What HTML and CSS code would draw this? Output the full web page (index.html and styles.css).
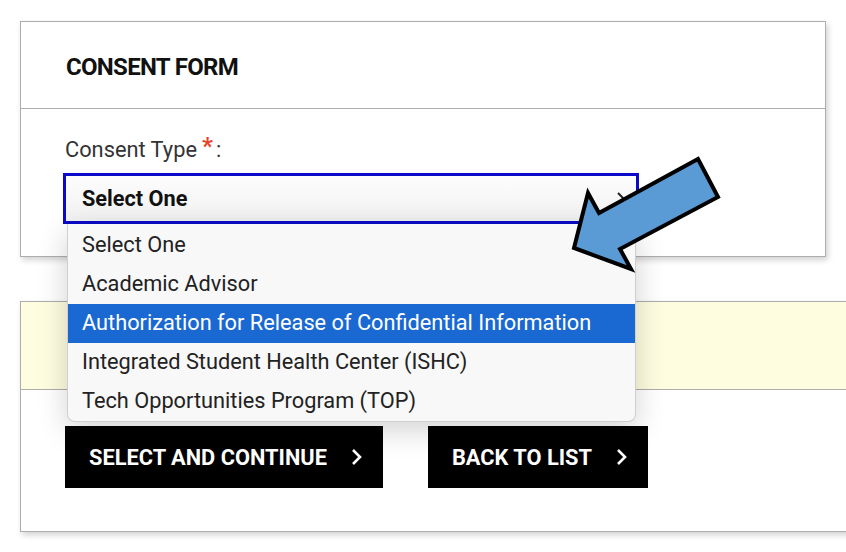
FILE: index.html
```html
<!DOCTYPE html>
<html lang="en">
<head>
<meta charset="utf-8">
<title>Consent Form</title>
<link rel="stylesheet" href="styles.css">
</head>
<body>
<div class="page">
  <section class="card consent">
    <header class="card-head"><h2 class="title">CONSENT FORM</h2></header>
    <div class="card-body">
      <label class="label">Consent Type<span class="req">*</span>:</label>
      <div class="select-wrap">
        <div class="select">
          <span>Select One</span>
          <svg class="select-chev" width="10" height="16" viewBox="0 0 10 16"><path d="M2 2 L8 8 L2 14" fill="none" stroke="#222" stroke-width="2"/></svg>
        </div>
        <ul class="menu">
          <li class="opt">Select One</li>
          <li class="opt">Academic Advisor</li>
          <li class="opt active">Authorization for Release of Confidential Information</li>
          <li class="opt">Integrated Student Health Center (ISHC)</li>
          <li class="opt">Tech Opportunities Program (TOP)</li>
        </ul>
      </div>
    </div>
  </section>
  <section class="card actions">
    <div class="notice"></div>
    <div class="buttons">
      <button class="btn wide">SELECT AND CONTINUE<svg class="btn-chev" width="12" height="20" viewBox="0 0 12 20"><path d="M3 3 L10 10 L3 17" fill="none" stroke="#fff" stroke-width="2.6"/></svg></button>
      <button class="btn">BACK TO LIST<svg class="btn-chev" width="12" height="20" viewBox="0 0 12 20"><path d="M3 3 L10 10 L3 17" fill="none" stroke="#fff" stroke-width="2.6"/></svg></button>
    </div>
  </section>
  <svg class="pointer" width="156" height="122" viewBox="0 0 156 122">
    <polygon points="6,95 20,40 31,60 130,6 150,44 52,96 63,116" fill="#5b9bd5" stroke="#000" stroke-width="4" stroke-linejoin="miter"/>
  </svg>
</div>
</body>
</html>
```

FILE: styles.css
```css
html, body {
  margin: 0;
  padding: 0;
  background: #fff;
  overflow: hidden;
}
body {
  font-family: Roboto, "Liberation Sans", Arial, sans-serif;
  color: #222;
  width: 846px;
  height: 552px;
}
.page {
  position: relative;
  padding: 21px 0 0 20px;
  width: 846px;
  height: 552px;
  box-sizing: border-box;
}
.card {
  border: 1px solid #adadad;
  background: #fff;
  box-shadow: 2px 3px 6px rgba(0,0,0,0.18);
}
.consent {
  width: 804px;
}
.card-head {
  height: 86px;
  border-bottom: 1px solid #adadad;
  display: flex;
  align-items: center;
  padding-left: 45px;
}
.title {
  margin: 0;
  font-size: 24px;
  font-weight: 700;
  letter-spacing: -0.7px;
  color: #111;
  padding-top: 4px;
}
.card-body {
  padding: 28px 0 32px 42px;
}
.label {
  display: block;
  font-size: 21.8px;
  color: #333;
  line-height: 24px;
  margin: 0 0 11px 2px;
}
.req {
  color: #e8452c;
  font-size: 24px;
  font-weight: 700;
  margin-left: 5px;
  margin-right: 3px;
  position: relative;
  top: -3px;
}
.select-wrap {
  position: relative;
  width: 576px;
}
.select {
  height: 45px;
  border: 3px solid #0a0ac8;
  background: linear-gradient(#fdfdfd, #f1f1f1);
  display: flex;
  align-items: center;
  justify-content: space-between;
  padding: 0 10px 0 16px;
  font-size: 21.7px;
  font-weight: 700;
  color: #111;
}
.select-chev {
  display: block;
}
.menu {
  position: absolute;
  z-index: 5;
  top: 100%;
  left: 4px;
  width: 567px;
  margin: 0;
  padding: 2px 0 0;
  list-style: none;
  background: #f8f8f8;
  border: 1px solid #cfcfcf;
  border-top: none;
  border-radius: 0 0 8px 8px;
  box-shadow: 0 8px 30px rgba(0,0,0,0.18);
}
.opt {
  height: 39px;
  line-height: 38px;
  padding-left: 14px;
  font-size: 21.75px;
  color: #222;
  white-space: nowrap;
}
.opt.active {
  background: #1a68d2;
  color: #fff;
}
.actions {
  margin-top: 44px;
  width: 840px;
  border-right: none;
}
.notice {
  height: 87px;
  background: #fefde0;
  border-bottom: 1px solid #adadad;
}
.buttons {
  display: flex;
  gap: 45px;
  padding: 36px 0 43px 44px;
}
.btn {
  height: 62px;
  background: #000;
  color: #fff;
  border: none;
  display: flex;
  align-items: center;
  gap: 23px;
  padding: 0 21px 0 24px;
  font-family: Roboto, "Liberation Sans", Arial, sans-serif;
  font-size: 21.8px;
  font-weight: 700;
  letter-spacing: 0;
}
.btn-chev {
  display: block;
}
.pointer {
  position: absolute;
  left: 568px;
  top: 153px;
  z-index: 10;
}
```
